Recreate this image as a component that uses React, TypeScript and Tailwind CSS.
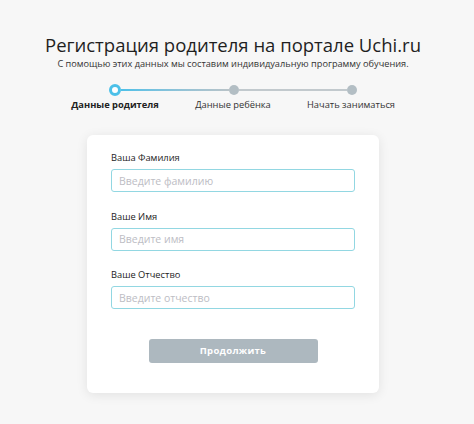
import React from "react";

const fields = [
  { label: "Ваша Фамилия", placeholder: "Введите фамилию" },
  { label: "Ваше Имя", placeholder: "Введите имя" },
  { label: "Ваше Отчество", placeholder: "Введите отчество" },
];

export default function App() {
  return (
    <main
      className="min-h-screen w-[474px] h-[424px] bg-[#f7f7f7] text-[#222]"
      style={{ fontFamily: '"Open Sans", "Liberation Sans", sans-serif' }}
    >
      <div className="w-[466px] flex flex-col items-center pt-[33px]">
        {/* Header */}
        <h1 className="text-[18.5px] leading-[24px] text-[#1f1f1f] font-normal">
          Регистрация родителя на портале Uchi.ru
        </h1>
        <p className="text-[9.2px] leading-[14px] text-[#333]">
          С помощью этих данных мы составим индивидуальную программу обучения.
        </p>

        {/* Stepper */}
        <div className="mt-[13px] w-[248px] flex items-center">
          <div className="w-[12px] h-[12px] rounded-full border-[3px] border-[#4cc0e8] bg-white shrink-0" />
          <div className="flex-1 h-[2px] bg-gradient-to-r from-[#4cc0e8] to-[#b9c3c8]" />
          <div className="w-[10px] h-[10px] rounded-full bg-[#b3bec4] shrink-0" />
          <div className="flex-1 h-[2px] bg-[#c2c9cd]" />
          <div className="w-[10px] h-[10px] rounded-full bg-[#b3bec4] shrink-0" />
        </div>
        <div className="mt-[2px] w-[354px] grid grid-cols-3 text-center text-[9.3px] leading-[14px]">
          <span className="font-bold text-[#222]">Данные родителя</span>
          <span className="text-[#333]">Данные ребёнка</span>
          <span className="text-[#333]">Начать заниматься</span>
        </div>

        {/* Form card */}
        <div className="mt-[23px] w-[292px] bg-white rounded-[6px] shadow-[0_2px_12px_rgba(0,0,0,0.09)] px-[24px] pt-[17px] pb-[30px]">
          {fields.map((f, i) => (
            <div key={f.label} className={i > 0 ? "mt-[18.5px]" : ""}>
              <label className="block text-[9.3px] leading-[12px] text-[#222] mb-[5px]">
                {f.label}
              </label>
              <input
                placeholder={f.placeholder}
                className="block w-full h-[23px] border border-[#92d7e2] rounded-[3px] px-[7px] text-[10.5px] text-[#333] placeholder-[#bdbdc4] outline-none"
              />
            </div>
          ))}
          <div className="mt-[30px] flex justify-center">
            <button className="w-[169px] h-[24px] rounded-[3px] bg-[#adb8bf] text-white text-[9.5px] font-bold tracking-[0.3px]">
              Продолжить
            </button>
          </div>
        </div>
      </div>
    </main>
  );
}
